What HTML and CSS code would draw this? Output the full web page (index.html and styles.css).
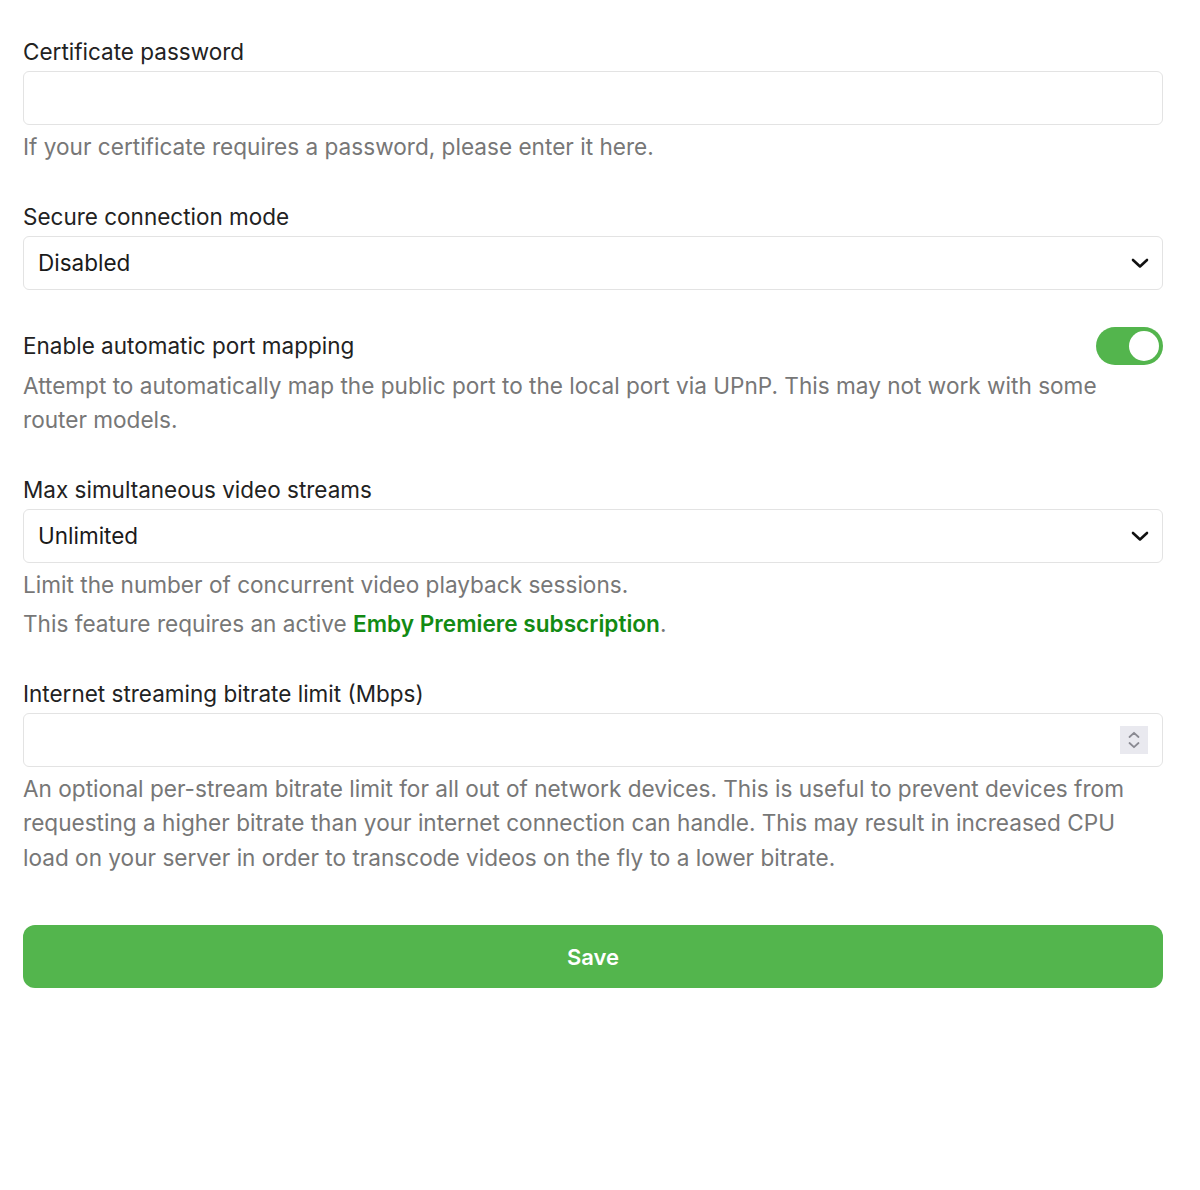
FILE: index.html
```html
<!DOCTYPE html>
<html lang="en">
<head>
<meta charset="utf-8">
<title>Settings</title>
<link rel="stylesheet" href="styles.css">
</head>
<body>
<form class="page">
  <div class="field">
    <label class="label">Certificate password</label>
    <div class="input"></div>
    <p class="help">If your certificate requires a password, please enter it here.</p>
  </div>

  <div class="field">
    <label class="label">Secure connection mode</label>
    <div class="input select">
      <span class="value">Disabled</span>
      <svg class="chev" viewBox="0 0 20 20" width="20" height="20"><path d="M3 7 L10 13.5 L17 7" fill="none" stroke="#111" stroke-width="2.6" stroke-linecap="round" stroke-linejoin="round"/></svg>
    </div>
  </div>

  <div class="field">
    <div class="toggle-row">
      <label class="label">Enable automatic port mapping</label>
      <span class="toggle"><span class="knob"></span></span>
    </div>
    <p class="help help-toggle">Attempt to automatically map the public port to the local port via UPnP. This may not work with some router models.</p>
  </div>

  <div class="field">
    <label class="label">Max simultaneous video streams</label>
    <div class="input select">
      <span class="value">Unlimited</span>
      <svg class="chev" viewBox="0 0 20 20" width="20" height="20"><path d="M3 7 L10 13.5 L17 7" fill="none" stroke="#111" stroke-width="2.6" stroke-linecap="round" stroke-linejoin="round"/></svg>
    </div>
    <p class="help">Limit the number of concurrent video playback sessions.</p>
    <p class="help help-second">This feature requires an active <a class="link" href="#">Emby Premiere subscription</a>.</p>
  </div>

  <div class="field">
    <label class="label">Internet streaming bitrate limit (Mbps)</label>
    <div class="input number">
      <span class="spinner">
        <svg viewBox="0 0 28 28" width="28" height="28"><path d="M9.5 11 L14 6.8 L18.5 11" fill="none" stroke="#8a8a92" stroke-width="1.8" stroke-linecap="round" stroke-linejoin="round"/><path d="M9.5 17 L14 21.2 L18.5 17" fill="none" stroke="#8a8a92" stroke-width="1.8" stroke-linecap="round" stroke-linejoin="round"/></svg>
      </span>
    </div>
    <p class="help">An optional per-stream bitrate limit for all out of network devices. This is useful to prevent devices from requesting a higher bitrate than your internet connection can handle. This may result in increased CPU load on your server in order to transcode videos on the fly to a lower bitrate.</p>
  </div>

  <button type="button" class="save">Save</button>
</form>
</body>
</html>
```

FILE: styles.css
```css
* { box-sizing: border-box; }
html, body {
  margin: 0;
  padding: 0;
  background: #fff;
}
body {
  font-family: Inter, "Noto Sans", "Liberation Sans", sans-serif;
  color: #222;
}
.page {
  padding: 37px 37px 40px 23px;
  display: flex;
  flex-direction: column;
  gap: 37px;
}
.field {
  display: flex;
  flex-direction: column;
}
.label {
  font-size: 22.5px;
  line-height: 30px;
  color: #222;
  margin-bottom: 4px;
}
.input {
  height: 54px;
  border: 1px solid #e3e3e3;
  border-radius: 6px;
  background: #fff;
  display: flex;
  align-items: center;
}
.select {
  padding: 0 12px 0 14px;
  justify-content: space-between;
}
.select .value {
  font-size: 22.5px;
  color: #1a1a1a;
}
.chev { display: block; }
.number {
  justify-content: flex-end;
  padding-right: 14px;
}
.spinner {
  width: 28px;
  height: 28px;
  background: #e9e9ef;
  display: block;
}
.spinner svg { display: block; }
.help {
  margin: 5px 0 0;
  padding-right: 22px;
  font-size: 22.6px;
  line-height: 34.5px;
  color: #777;
}
.help-second { margin-top: 5px; }
.help-toggle { margin-top: 4px; }
.link {
  color: #138a13;
  font-weight: 600;
  text-decoration: none;
}
.toggle-row {
  display: flex;
  align-items: center;
  justify-content: space-between;
  height: 38px;
}
.toggle-row .label { margin-bottom: 0; }
.toggle {
  width: 67px;
  height: 38px;
  border-radius: 19px;
  background: #53b54d;
  position: relative;
  display: block;
}
.knob {
  position: absolute;
  right: 4px;
  top: 4px;
  width: 30px;
  height: 30px;
  border-radius: 50%;
  background: #fff;
}
.save {
  margin-top: 13px;
  height: 63px;
  width: 100%;
  border: none;
  border-radius: 12px;
  background: #53b54d;
  color: #fff;
  font-family: Inter, "Noto Sans", "Liberation Sans", sans-serif;
  font-size: 22px;
  font-weight: 600;
}
```
